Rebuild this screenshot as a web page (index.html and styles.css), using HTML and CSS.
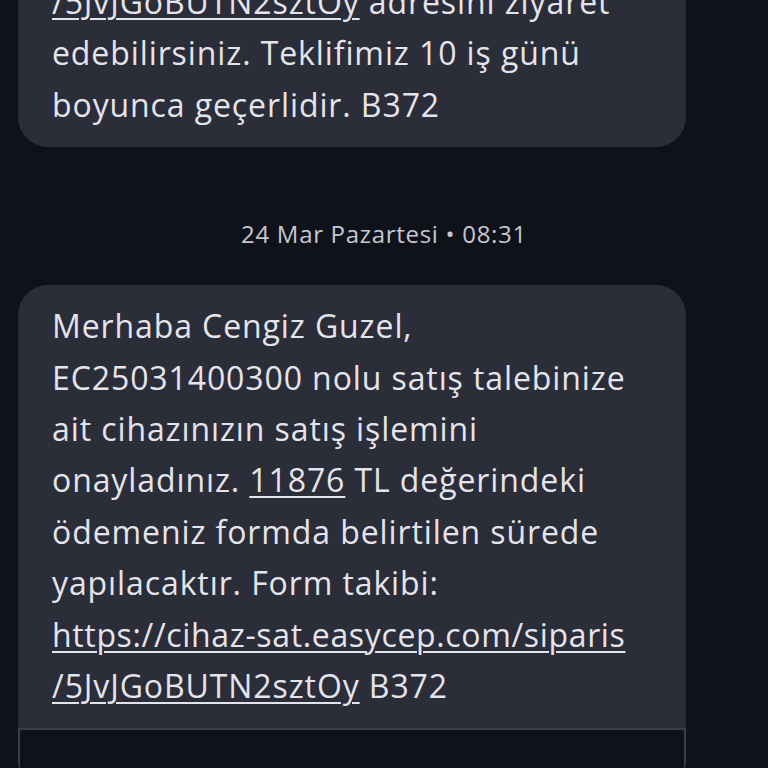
FILE: index.html
```html
<!DOCTYPE html>
<html lang="tr">
<head>
    <meta charset="UTF-8">
    <title>Mesajlar</title>
    <meta name="viewport" content="width=device-width, initial-scale=1.0">
    <link rel="stylesheet" href="styles.css">
</head>
<body>
    <main class="thread">
        <div class="bubble bubble-prev">
            <p class="msg">
                <a class="link" href="#">/5JvJGoBUTN2sztOy</a> adresini ziyaret<br>
                edebilirsiniz. Teklifimiz 10 iş günü<br>
                boyunca geçerlidir. B372
            </p>
        </div>

        <div class="stamp">24 Mar Pazartesi • 08:31</div>

        <div class="bubble">
            <p class="msg">
                Merhaba Cengiz Guzel,<br>
                EC25031400300 nolu satış talebinize<br>
                ait cihazınızın satış işlemini<br>
                onayladınız. <a class="link" href="#">11876</a> TL değerindeki<br>
                ödemeniz formda belirtilen sürede<br>
                yapılacaktır. Form takibi:<br>
                <a class="link link-url" href="#">https://cihaz-sat.easycep.com/siparis</a><br>
                <a class="link" href="#">/5JvJGoBUTN2sztOy</a> B372
            </p>
            <!-- link preview card -->
            <div class="preview"></div>
        </div>
    </main>
</body>
</html>
```

FILE: styles.css
```css
body {
    margin: 0;
    background-color: #10121a;
    font-family: "Open Sans", Roboto, Arial, sans-serif;
    color: #e4e4ed;
    overflow: hidden;
}
.thread {
    display: flex;
    flex-direction: column;
    margin-top: -39px;
    padding: 0 82px 0 18px;
}
.bubble {
    background-color: #2b2d38;
    border-radius: 30px;
    overflow: hidden;
}
.bubble-prev {
    border-radius: 0 0 30px 30px;
}
.msg {
    margin: 0;
    padding: 15px 34px 17px;
    font-size: 32px;
    line-height: 51.4px;
    letter-spacing: 0.9px;
    white-space: nowrap;
}
.link {
    color: inherit;
    text-decoration: underline;
    text-decoration-thickness: 2px;
    text-underline-offset: 4px;
}
.link-url {
    letter-spacing: 0.65px;
}
.stamp {
    margin: 72px -64px 36px 0;
    text-align: center;
    font-size: 24px;
    line-height: 30px;
    letter-spacing: 0.7px;
    color: #c6c7d1;
}
.preview {
    height: 60px;
    border: 2px solid #3c3e4a;
    border-bottom: none;
    background-color: #10121a;
}
```
